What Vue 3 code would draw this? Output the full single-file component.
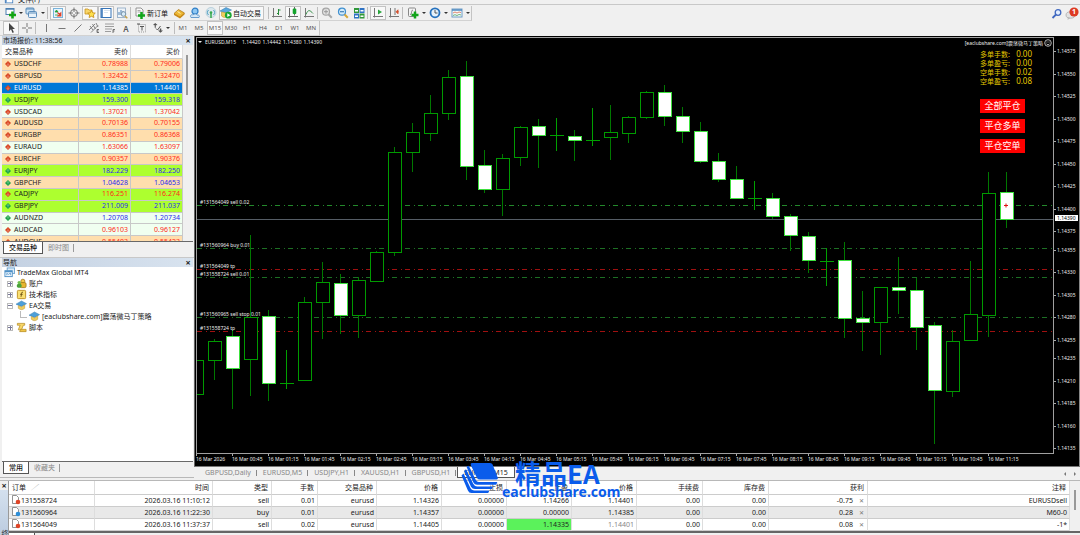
<script setup>
const ic = {
  newChart: '<rect x="1" y="1.500" width="8" height="6" fill="#fff" stroke="#4d7fb0"/><path d="M1 2h8" stroke="#4d7fb0" stroke-width="1.500"/><path d="M7.500 4.500v7M4 8h7" stroke="#12a512" stroke-width="2.600"/>',
  profiles: '<rect x="1" y="1" width="8" height="6" rx="1" fill="#cfe4f5" stroke="#5b8dbb"/><path d="M1 2h8" stroke="#5b8dbb"/><rect x="3.500" y="4.500" width="8" height="6" rx="1" fill="#e8f2fa" stroke="#5b8dbb"/><path d="M4 6h7" stroke="#5b8dbb"/>',
  market: '<rect x="1.500" y="1.500" width="9" height="9" fill="#eaf4fb" stroke="#79b4dc"/><path d="M3 5l1.500-2L6 5zM3 8h3" stroke="#22a03a" fill="#22a03a" stroke-width=".8"/><path d="M5.500 5.500l3 3M8.800 6v3H6z" stroke="#e0442c" fill="#e0442c" stroke-width="1.200"/>',
  target: '<circle cx="6" cy="6" r="3.500" fill="none" stroke="#777"/><path d="M6 .5V5M6 7v4.500M.5 6H5M7 6h4.500" stroke="#777"/>',
  navigator: '<path d="M1 2h3l1 1h3v4H1z" fill="#f8d66a" stroke="#c79320" stroke-width=".8"/><path d="M7.500 3.500l1.200 2.300 2.600.3-1.900 1.800.5 2.600-2.400-1.200-2.400 1.200.5-2.600-1.900-1.800 2.600-.3z" fill="#ffe14d" stroke="#c48a12" stroke-width=".8"/>',
  terminal: '<rect x="1" y="1.500" width="10" height="9" fill="#fff" stroke="#3674b8"/><path d="M2 2v8" stroke="#3674b8" stroke-width="1.500"/><path d="M4 3.500h6M4 5.500h4" stroke="#cfdcea" stroke-width=".8"/>',
  tester: '<rect x="1.500" y="1" width="8" height="9.500" fill="#eef3f8" stroke="#8aa5c0" stroke-width=".8"/><path d="M3 8V5M5 8V3M7 7V4" stroke="#4d82b8"/><circle cx="7.500" cy="7" r="2.300" fill="#d7ecfa" stroke="#7b93a8"/><path d="M9 9l2.300 2.300" stroke="#c9a24a" stroke-width="1.500"/>',
  order: '<path d="M2 1h5l2 2v6H2z" fill="#fafafa" stroke="#888" stroke-width=".9"/><path d="M3.500 3.500h3M3.500 5h4" stroke="#888" stroke-width=".7"/><path d="M7.500 5v7M4 8.500h7" stroke="#12a51b" stroke-width="2.500"/>',
  gold: '<path d="M1 6.500l4.500-4 6 3.500-4.500 4.500z" fill="#edb835" stroke="#a8700e" stroke-width=".7"/><path d="M1 6.500l6 3 4.500-3.500v1.500L7 11.500 1 8z" fill="#c98a18"/><path d="M4.500 4.500l3 2" stroke="#fff0b0"/>',
  cloud: '<circle cx="6" cy="4.200" r="3" fill="#8fc7f2" stroke="#2f7fc8" stroke-width="1.200"/><path d="M2 10.500c-1.500-2 .5-3.500 2-2.500 1-1.500 3.500-1.500 4 0 2-.5 3 1 2 2.500z" fill="#d5e7f6" stroke="#5a93c8" stroke-width=".9"/>',
  signal: '<circle cx="6" cy="5.500" r="5" fill="#dce8ee" stroke="#a6c4d4" stroke-width=".7"/><path d="M3.500 8a3.400 3.400 0 010-5M8.500 8a3.400 3.400 0 000-5" stroke="#4a9dc0" fill="none"/><circle cx="6" cy="5.500" r="1.300" fill="#35a84c"/><path d="M6 6v5" stroke="#35a84c" stroke-width="1.500"/>',
  hat: '<path d="M0 4.500L6 1l5.500 3L6 7z" fill="#4d9fd8" stroke="#2d74ac" stroke-width=".5"/><path d="M2.500 6v3c2 2 5 2 7 0V5.500L6 7.500z" fill="#f0cd5d" stroke="#b58d26" stroke-width=".5"/>',
  auto: '<path d="M0 4L6 .5 11.500 3 6 6z" fill="#5aa8dc" stroke="#2d74ac" stroke-width=".5"/><path d="M1.500 5v4c2 2 4 1.500 5 1V6z" fill="#f0cd5d" stroke="#b58d26" stroke-width=".5"/><circle cx="8.300" cy="8.200" r="3.400" fill="#1aa533"/><path d="M7.300 6.300l3 1.900-3 1.900z" fill="#fff"/>',
  bars: '<path d="M2.500 1v9.500M1 9.500h10" stroke="#777"/><path d="M7.500 2v6M6 6.500h1.500M7.500 3H9.500" stroke="#278a38"/>',
  candle: '<path d="M2.500 1v9.500M1 9.500h10M7.500 0v8.500" stroke="#666"/><rect x="5.700" y="1.500" width="3.600" height="5.500" rx="1" fill="#14a32c"/>',
  line: '<path d="M2.500 1v9.500M1 9.500h10" stroke="#777"/><path d="M3 7.500C5 2 7 3 10 6.500" fill="none" stroke="#3d9450"/>',
  zoomIn: '<circle cx="5" cy="4.700" r="3.500" fill="#e3e3e3" stroke="#a5a5a5" stroke-width="1.200"/><path d="M3 4.700h4M5 2.700v4" stroke="#999"/><path d="M7.600 7.500l3.200 3.300" stroke="#aaa" stroke-width="2"/>',
  zoomOut: '<circle cx="5" cy="4.700" r="3.500" fill="#d5ecfa" stroke="#3f8fd0" stroke-width="1.200"/><path d="M3 4.700h4" stroke="#3f7fb8" stroke-width="1.200"/><path d="M7.600 7.500l3.200 3.300" stroke="#d6a93b" stroke-width="2"/>',
  tiles: '<rect x="1" y="1" width="5" height="5" fill="#30983a"/><rect x="6.500" y="1" width="5" height="5" fill="#2e72c4"/><rect x="1" y="6.500" width="5" height="5" fill="#2e72c4"/><rect x="6.500" y="6.500" width="5" height="5" fill="#30983a"/><path d="M2 3.800h3M7.500 3.800h3M2 9.300h3M7.500 9.300h3" stroke="#fff" stroke-width="1.500"/>',
  scroll: '<path d="M2.500 1v9.500M1 9.500h10" stroke="#777"/><path d="M6 2.500l4 2.500-4 2.500z" fill="#2aa53c"/>',
  shift: '<path d="M2.500 1v9.500M1 9.500h10M7 1v7" stroke="#777"/><path d="M11 4.800H8.500M8 4.800l2-2v4z" stroke="#d4512e" fill="#d4512e" stroke-width=".8"/>',
  indicator: '<rect x="1.500" y="1" width="7" height="8.500" rx="1" fill="#f4f4f4" stroke="#888"/><path d="M6 3c-2 0-1 5-3 4.500" fill="none" stroke="#777"/><path d="M8 4.500v7M4.500 8h7" stroke="#12a51b" stroke-width="2.500"/>',
  clock: '<circle cx="6" cy="5.800" r="4.500" fill="#e6f2fb" stroke="#2672be" stroke-width="1.800"/><path d="M6 3v3h2.500" fill="none" stroke="#444" stroke-width=".9"/>',
  template: '<rect x="1" y="2" width="10" height="8" fill="#f5f9fc" stroke="#6d9cc6"/><path d="M1 3h10" stroke="#4d88bf" stroke-width="1.500"/><path d="M2 6l2-1 2 1 2-1 2 .5" fill="none" stroke="#d66a4a" stroke-width=".8"/><path d="M2 8.500l2-.8 2 .8 2-1 2 .5" fill="none" stroke="#4aa25a" stroke-width=".8"/>',
  cursor: '<path d="M4 1v8.200l2-1.900L7.500 11l1.400-.7L7.400 7H10z" fill="#444"/>',
  cross: '<path d="M6 1v4M6 7v4M1 6h4M7 6h4" stroke="#777"/>',
  vline: '<path d="M6.500 2v8" stroke="#777"/>',
  hline: '<path d="M2.500 6.500h7" stroke="#777"/>',
  dline: '<path d="M2.500 9.500l7-7" stroke="#777"/>',
  channel: '<path d="M1 8l6-6M3 10.500l7-7M2 4l3 4M4.500 2l3 5M8 1l2 4" stroke="#777" stroke-width=".9"/><path d="M11 7.500H9v3h2M9 9h1.500" stroke="#555" fill="none" stroke-width=".8"/>',
  fibo: '<path d="M1 2h9M1 4.500h9M1 7h7M1 9.500h6" stroke="#888" stroke-width=".8"/><path d="M9 11V7.500h2M9 9h1.500" stroke="#555" fill="none" stroke-width=".8"/>',
  label: '<rect x="2.500" y="2.500" width="7" height="7.500" fill="none" stroke="#999" stroke-dasharray="1 1"/><path d="M4 4.500h4M6 4.500v4M1 2h3" stroke="#555"/>',
  arrows: '<path d="M1 3l2.200-2L5.500 3 3.800 3.300v2.500H2.700V3.300zM6 8.500l2.500 2.300 2.500-2.300H9.300V6.500H7.800v2z" fill="#555"/><path d="M4 6.500l1.500 1.500L8.500 4" fill="none" stroke="#555"/>',
  accounts: '<circle cx="7.500" cy="3.500" r="2.200" fill="#f2c94c" stroke="#9c7417" stroke-width=".8"/><rect x="4.500" y="5" width="6.500" height="5.500" rx="1.500" fill="#e6b62f" stroke="#9c7417" stroke-width=".8"/><circle cx="3.500" cy="5" r="1.800" fill="#6cc04a"/><rect x="1" y="6.500" width="5" height="4" rx="1.500" fill="#4aa23a"/>',
  fx: '<rect x="1.500" y="1.500" width="9" height="9" rx="1" fill="#f9df72" stroke="#bd8f22"/><path d="M7.500 3.500c-2-.5-1.300 2-2 5M4.500 5.800h2.800" fill="none" stroke="#6b5010"/>',
  script: '<path d="M1.500 1.500h8v2H8l-2 5H2.500l2-5h-3z" fill="#f8d768" stroke="#b58a20" stroke-width=".8"/><path d="M5 8h6v2.500H4z" fill="#f0c548" stroke="#b58a20" stroke-width=".8"/>',
  servers: '<rect x="3.500" y="1" width="8" height="6" fill="#dcecf8" stroke="#6ba3d0"/><rect x="1" y="4" width="8" height="6.500" fill="#f2f9ff" stroke="#4c8fc6"/><path d="M1 5h8" stroke="#4c8fc6" stroke-width="1.500"/><path d="M3 9V7l2 1 2-1.500V9" fill="none" stroke="#4c8fc6" stroke-width=".8"/>',
}
const bar1 = [
  { i: 'newChart', t: '新图表', c: 4 }, { i: 'profiles', t: '配置', c: 8 }, { s: 3 },
  { i: 'market', t: '市场报价', on: 1 }, { i: 'target', t: '数据窗口' }, { i: 'navigator', t: '导航', on: 1 }, { i: 'terminal', t: '终端', on: 1 }, { i: 'tester', t: '策略测试' }, { s: 3 },
  { i: 'order', t: '新订单', text: 1, w: 'w38' }, { i: 'gold', t: '编辑器' }, { i: 'cloud', t: '云' }, { i: 'signal', t: '信号' }, { i: 'auto', t: '自动交易', text: 1, on: 1, w: 'w45' }, { s: 5 },
  { i: 'bars', t: '柱状图' }, { i: 'candle', t: '阴阳烛', on: 1 }, { i: 'line', t: '折线图' }, { s: 2 },
  { i: 'zoomIn', t: '放大' }, { i: 'zoomOut', t: '缩小' }, { i: 'tiles', t: '平铺' }, { s: 3 },
  { i: 'scroll', t: '自动滚动', on: 1 }, { i: 'shift', t: '图表平移' }, { s: 3 },
  { i: 'indicator', t: '指标', c: 6 }, { i: 'clock', t: '时间周期', c: 6 }, { i: 'template', t: '模板', c: 6 },
]
const bar2 = [
  { i: 'cursor', t: '光标', on: 1 }, { i: 'cross', t: '十字' }, { s: 3 }, { i: 'vline', t: '垂直线' }, { i: 'hline', t: '水平线' }, { i: 'dline', t: '趋势线' },
  { i: 'channel', t: '通道' }, { i: 'fibo', t: '斐波那契' }, { l: 'A', big: 1 }, { i: 'label', t: '标签' }, { i: 'arrows', t: '箭头', c: 4 }, { s: 5 },
  ...['M1', 'M5', 'M15', 'M30', 'H1', 'H4', 'D1', 'W1', 'MN'].map((l) => ({ l, on: l === 'M15' })),
]

const quotes = [
  ['USDCHF', '0.78988', '0.79006', 'peach', 'red', 0], ['GBPUSD', '1.32452', '1.32470', 'peach', 'red', 0],
  ['EURUSD', '1.14385', '1.14401', 'sel', 'white', 0], ['USDJPY', '159.300', '159.318', 'lime', 'blue', 1],
  ['USDCAD', '1.37021', '1.37042', 'mint', 'red', 0], ['AUDUSD', '0.70136', '0.70155', 'peach', 'red', 0],
  ['EURGBP', '0.86351', '0.86368', 'peach', 'red', 0], ['EURAUD', '1.63066', '1.63097', 'mint', 'red', 0],
  ['EURCHF', '0.90357', '0.90376', 'peach', 'red', 0], ['EURJPY', '182.229', '182.250', 'lime', 'blue', 1],
  ['GBPCHF', '1.04628', '1.04653', 'peach', 'blue', 1], ['CADJPY', '116.251', '116.274', 'lime', 'red', 0],
  ['GBPJPY', '211.009', '211.037', 'lime', 'blue', 1], ['AUDNZD', '1.20708', '1.20734', 'mint', 'blue', 1],
  ['AUDCAD', '0.96103', '0.96127', 'mint', 'red', 0], ['AUDCHF', '0.55403', '0.55423', 'peach', 'red', 0],
]

/* high, body top, body bottom, low, kind: u = hollow, d = filled, x = doji */
const candles = [
  [313, 322, 356, 362, 'u'], [301, 303, 322, 342, 'u'], [292, 298, 330, 371, 'd'], [197, 279, 321, 358, 'u'], [272, 278, 345, 363, 'd'],
  [312, 345, 345, 351, 'x'], [259, 264, 342, 343, 'u'], [224, 244, 264, 301, 'u'], [236, 245, 277, 296, 'd'], [239, 242, 277, 300, 'u'],
  [213, 214, 243, 243, 'u'], [109, 114, 214, 218, 'u'], [85, 94, 114, 134, 'u'], [57, 75, 95, 103, 'u'], [32, 39, 75, 82, 'u'],
  [23, 38, 128, 142, 'd'], [112, 127, 151, 155, 'd'], [116, 120, 151, 178, 'u'], [88, 89, 119, 128, 'u'], [81, 88, 97, 130, 'd'],
  [80, 97, 97, 113, 'x'], [92, 98, 102, 123, 'd'], [70, 102, 102, 108, 'x'], [67, 94, 99, 122, 'u'], [78, 79, 95, 105, 'u'],
  [53, 54, 79, 81, 'u'], [47, 54, 78, 88, 'd'], [69, 78, 93, 105, 'd'], [84, 93, 123, 125, 'd'], [115, 123, 141, 144, 'd'],
  [128, 141, 160, 160, 'd'], [143, 160, 160, 172, 'x'], [155, 160, 178, 181, 'd'], [176, 178, 197, 213, 'd'], [194, 198, 222, 235, 'd'],
  [210, 223, 223, 248, 'x'], [204, 222, 280, 300, 'd'], [253, 280, 284, 313, 'd'], [249, 249, 284, 317, 'u'], [219, 249, 252, 276, 'd'],
  [240, 252, 289, 312, 'd'], [284, 287, 352, 406, 'd'], [292, 303, 353, 359, 'u'], [223, 276, 302, 302, 'u'], [134, 155, 277, 299, 'u'],
  [134, 154, 181, 190, 'd'],
]
const cx = (i) => i * 18
const levels = [
  [167, 'g1', '#131564049 sell 0.02'], [210, 'g2', '#131560964 buy 0.01'], [231, 'r', '#131564049 tp'],
  [239, 'g2', '#131558724 sell 0.01'], [279, 'g2', '#131560965 sell stop 0.01'], [293, 'r', '#131558724 tp'],
]
const prices = [
  ['1.14575', 14], ['1.14550', 37], ['1.14525', 59], ['1.14500', 82], ['1.14475', 104], ['1.14450', 127], ['1.14425', 149], ['1.14400', 172],
  ['1.14375', 194], ['1.14355', 213], ['1.14330', 235], ['1.14305', 258], ['1.14280', 280], ['1.14255', 303], ['1.14235', 321], ['1.14210', 344],
  ['1.14185', 366], ['1.14160', 389], ['1.14135', 411],
]
const times = ['16 Mar 2026']
for (let k = 0; k < 22; k++) {
  const m = 45 + k * 30
  times.push(`16 Mar ${String(Math.floor(m / 60)).padStart(2, '0')}:${String(m % 60).padStart(2, '0')}`)
}
const stats = [['多单手数:', '0.00'], ['多单盈亏:', '0.00'], ['空单手数:', '0.02'], ['空单盈亏:', '0.08']]
const chartTabs = ['GBPUSD,Daily', 'EURUSD,M5', 'USDJPY,H1', 'XAUUSD,H1', 'GBPUSD,H1', 'EURUSD,M15']
const heads = ['时间', '类型', '手数', '交易品种', '价格', '止损', '止盈', '价格', '手续费', '库存费']
const orders = [
  { id: '131558724', side: 'sell', v: ['2026.03.16 11:10:12', 'sell', '0.01', 'eurusd', '1.14326', '0.00000', '1.14266', '1.14401', '0.00', '0.00'], p: '-0.75', n: 'EURUSDsell' },
  { id: '131560964', side: 'buy', v: ['2026.03.16 11:22:30', 'buy', '0.01', 'eurusd', '1.14357', '0.00000', '0.00000', '1.14385', '0.00', '0.00'], p: '0.28', n: 'M60-0' },
  { id: '131564049', side: 'sell', v: ['2026.03.16 11:37:37', 'sell', '0.02', 'eurusd', '1.14405', '0.00000', '1.14335', '1.14401', '0.00', '0.00'], p: '0.08', n: '-1*' },
]
</script>

<template>
  <div class="app">
    <header class="bars">
      <div class="menu"><svg class="ico" viewBox="0 0 12 12" v-html="ic.terminal"></svg><span>文件(F)</span></div>
      <div class="barline">
        <div v-for="(bar, bi) in [bar1, bar2]" :key="bi" class="bar">
          <template v-for="(b, k) in bar" :key="k">
            <i v-if="b.s" class="sep" :class="'s' + b.s"></i>
            <template v-else>
              <button class="tb" :class="[b.w, { on: b.on, big: b.big }]" type="button" :aria-label="b.t || b.l">
                <svg v-if="b.i" class="ico" viewBox="0 0 12 12" v-html="ic[b.i]"></svg>
                <span v-if="b.text">{{ b.t }}</span>
                <template v-if="b.l">{{ b.l }}</template>
              </button>
              <i v-if="b.c" class="caret" :class="'c' + b.c"></i>
            </template>
          </template>
        </div>
        <div class="tools">
          <button type="button" aria-label="搜索"><svg class="ico" viewBox="0 0 12 12"><circle cx="7" cy="4.500" r="2.800" fill="#e4efff" stroke="#4068c0" stroke-width="1.300" /><path d="M5 6.500L1.500 10" stroke="#4068c0" stroke-width="1.800" /></svg></button>
          <button type="button" class="chat" aria-label="消息"><svg viewBox="0 0 14 14"><ellipse cx="5.500" cy="8" rx="4.500" ry="3.200" fill="#e2e2e2" stroke="#aaa" stroke-width=".8" /><path d="M3 10l-.5 3 3-2z" fill="#bbb" /><circle cx="9" cy="5" r="4.600" fill="#dd3a22" /></svg><b>1</b></button>
        </div>
      </div>
    </header>

    <main class="work">
      <aside class="side">
        <section class="panel">
          <h2 class="title"><span>市场报价: 11:38:56</span><button type="button" aria-label="关闭">×</button></h2>
          <div class="quotes">
            <table>
              <thead><tr><th class="sym">交易品种</th><th>卖价</th><th>买价</th></tr></thead>
              <tbody>
                <tr v-for="q in quotes" :key="q[0]" :class="q[3]">
                  <td class="sym"><svg viewBox="0 0 6 6"><path d="M3 0l3 3-3 3-3-3z" :fill="q[5] ? '#15a045' : '#d8401c'" /><path :d="q[5] ? 'M3 1.500v3M1.800 2.800L3 1.500l1.200 1.300' : 'M3 1.500v3M1.800 3.200L3 4.500l1.200-1.300'" fill="none" stroke="#fff" stroke-width=".3" /></svg>{{ q[0] }}</td>
                  <td :class="q[4]">{{ q[1] }}</td><td :class="q[4]">{{ q[2] }}</td>
                </tr>
              </tbody>
            </table>
            <i class="thumb"></i>
          </div>
          <nav class="tabs"><button type="button" class="act">交易品种</button><button type="button">即时图</button></nav>
        </section>
        <section class="panel nav">
          <h2 class="title"><span>导航</span><button type="button" aria-label="关闭">×</button></h2>
          <ul class="tree">
            <li class="root"><svg class="ico" viewBox="0 0 12 12" v-html="ic.servers"></svg>TradeMax Global MT4</li>
            <li><i class="box plus"></i><svg class="ico" viewBox="0 0 12 12" v-html="ic.accounts"></svg>账户</li>
            <li><i class="box plus"></i><svg class="ico" viewBox="0 0 12 12" v-html="ic.fx"></svg>技术指标</li>
            <li><i class="box"></i><svg class="ico" viewBox="0 0 12 12" v-html="ic.hat"></svg>EA交易</li>
            <li class="leaf"><i class="elbow"></i><svg class="ico" viewBox="0 0 12 12" v-html="ic.hat"></svg>[eaclubshare.com]震荡微马丁策略</li>
            <li><i class="box plus"></i><svg class="ico" viewBox="0 0 12 12" v-html="ic.script"></svg>脚本</li>
          </ul>
          <nav class="tabs"><button type="button" class="act">常用</button><button type="button">收藏夹</button></nav>
        </section>
      </aside>

      <section class="chartcol">
        <div class="chart">
          <div class="plot">
            <svg class="draw">
              <line x1="0" x2="100%" y1="181.500" y2="181.500" stroke="#555d66" />
              <line v-for="l in levels" :key="l[2]" x1="0" x2="100%" :y1="l[0] + 0.5" :y2="l[0] + 0.5" :class="l[1]" />
              <g v-for="(c, i) in candles" :key="i" :class="c[4]">
                <line class="wick" :x1="cx(i) - 0.5" :x2="cx(i) - 0.5" :y1="c[0]" :y2="c[3]" />
                <line v-if="c[4] === 'x'" :x1="cx(i) - 7" :x2="cx(i) + 7" :y1="c[1] + 0.5" :y2="c[1] + 0.5" />
                <rect v-else :x="cx(i) - 6.5" :y="c[1] + 0.5" width="13" :height="c[2] - c[1]" />
              </g>
              <path d="M807 167.500h4M809 165.500v4" stroke="#e01010" />
              <text v-for="l in levels" :key="l[2]" x="3" :y="l[0] - 1">{{ l[2] }}</text>
            </svg>
            <div class="quote"><i class="caret"></i><span>EURUSD,M15</span><span>1.14420</span><span>1.14442</span><span>1.14380</span><span>1.14390</span></div>
            <div class="ea"><span>[eaclubshare.com]震荡微马丁策略</span><svg viewBox="0 0 8 8"><circle cx="4" cy="4" r="3.300" fill="none" stroke="#ddd" stroke-width=".8" /><path d="M2.500 3h1M4.500 3h1M2.300 4.600c.7 1.500 2.700 1.500 3.400 0" fill="none" stroke="#ddd" stroke-width=".8" /></svg></div>
            <div class="info">
              <p v-for="s in stats" :key="s[0]"><span>{{ s[0] }}</span><b>{{ s[1] }}</b></p>
              <div class="btns"><button type="button">全部平仓</button><button type="button">平仓多单</button><button type="button">平仓空单</button></div>
            </div>
          </div>
          <svg class="prices">
            <template v-for="p in prices" :key="p[0]"><path :d="`M0 ${p[1] + 0.5}h2`" stroke="#aaa" /><text x="3" :y="p[1] + 2">{{ p[0] }}</text></template>
            <rect x="1" y="178" width="23" height="6" fill="#fff" /><text x="3" y="183" class="cur">1.14390</text>
          </svg>
          <div class="times"><span v-for="t in times" :key="t">{{ t }}</span></div>
        </div>
        <nav class="ctabs">
          <button v-for="t in chartTabs" :key="t" type="button" :class="{ act: t === 'EURUSD,M15' }">{{ t }}</button>
          <span class="arrows"><i></i><i class="r"></i></span>
        </nav>
      </section>
    </main>

    <section class="terminal">
      <div class="vtitle"><button type="button" aria-label="关闭">×</button><span>终端</span></div>
      <div class="tbody">
        <div class="grid">
          <table>
            <colgroup><col class="a" /><col class="b" /><col class="c" /><col class="d" /><col class="e" /><col v-for="n in 6" :key="n" :class="n > 4 ? 'h' : 'f'" /><col class="g" /><col /></colgroup>
            <thead><tr><th class="first">订单 <em>∕</em></th><th v-for="(h, k) in heads" :key="k">{{ h }}</th><th>获利</th><th>注释</th></tr></thead>
            <tbody>
              <tr v-for="o in orders" :key="o.id">
                <td class="first"><svg viewBox="0 0 10 10"><path d="M1.500.5h4l2 2v6h-6z" fill="#fff" stroke="#777" stroke-width=".8" /><circle cx="7" cy="7" r="2.300" :fill="o.side === 'buy' ? '#2c8ed8' : '#de4526'" /></svg>{{ o.id }}</td>
                <td v-for="(v, k) in o.v" :key="k" :class="{ hit: v === '1.14335', dim: k === 7 && o.p === '0.08' }">{{ v }}</td>
                <td class="profit">{{ o.p }}<button type="button" aria-label="平仓">✕</button></td>
                <td>{{ o.n }}</td>
              </tr>
            </tbody>
          </table>
          <div class="rail"><i></i></div>
        </div>
        <div class="foot"><i></i></div>
      </div>
    </section>

    <div class="mark">
      <svg viewBox="0 0 38 34" fill="#0a5ceb"><path d="M11 2h18q2 0 2.600 1.600l5.200 13.200q.5 1.700-1.300 1.700H19q-2 0-3-1.600L9.700 4Q9.200 2 11 2z" /><path d="M5.500 5.800l2.300-1 7 14.200q1 2 3 2h18.500l-1 2.700H16q-2.500 0-3.600-2.300z" /><path d="M3 10l2-1.800 7.200 14.600q1.300 2.700 4 2.700H32l-1 2.500H14q-2.800 0-4-2.300z" /><path d="M.5 14.500l2-2 6.700 14q1.300 3 4.300 3h15l-1.300 2.500H10.500q-2.500 0-3.600-2.500z" /></svg>
      <div><strong>精品EA</strong><span>eaclubshare.com</span></div>
    </div>
  </div>
</template>

<style>
html, body { margin: 0; overflow: hidden; background: #f0f0f0; }
</style>

<style scoped>
.app { position: relative; display: flex; flex-direction: column; height: 100vh; overflow: hidden; background: #f0f0f0; color: #222; font: 7px/11px "Noto Sans", "Noto Sans CJK SC", sans-serif; }
button { padding: 0; border: 0; background: none; font: inherit; color: inherit; }
svg { display: block; flex: none; }
.ico { width: 12px; height: 12px; }
table { border-collapse: separate; border-spacing: 0; table-layout: fixed; width: 100%; }
th { font-weight: 400; }
th, td { padding: 0; white-space: nowrap; text-align: right; }

.bars { flex: none; height: 36px; }
.menu { display: flex; align-items: flex-end; gap: 3px; height: 4px; padding-left: 3px; overflow: hidden; border-bottom: 1px solid #c8c8c8; line-height: 9px; }
.menu .ico { height: 9px; }
.barline { position: relative; padding-top: 1px; }
.bar { display: flex; width: max-content; height: 15px; padding-left: 3px; border-right: 1px solid #c4c4c4; border-bottom: 1px solid #d2d2d2; box-sizing: border-box; }
.tb { display: flex; align-items: center; justify-content: center; width: 16px; height: 14px; font-size: 6px; color: #555; white-space: nowrap; box-sizing: border-box; }
.tb.on { border: 1px solid #c2c2c2; background: #f8f8f8; }
.tb.big { font-size: 8px; font-weight: 600; }
.tb span { font-size: 7px; color: #111; }
.w38 { width: 38px; padding-left: 1px; gap: 1px; justify-content: flex-start; }
.w45 { width: 45px; gap: 1px; justify-content: flex-start; }
.sep { margin: 1px 0; border-left: 1px solid #bdbdbd; box-sizing: border-box; }
.s2 { width: 2px; } .s3 { width: 3px; } .s5 { width: 5px; border-left: 0; border-right: 1px solid #bdbdbd; }
.caret { display: flex; align-items: center; justify-content: center; }
.caret::before { content: ""; border: 2px solid transparent; border-top-color: #333; border-bottom: 0; }
.c4 { width: 4px; } .c6 { width: 6px; } .c8 { width: 8px; }
.tools { position: absolute; top: 2px; right: 1px; display: flex; gap: 2px; }
.chat { position: relative; width: 14px; height: 14px; }
.chat b { position: absolute; top: 0; right: 3px; color: #fff; font-size: 7px; line-height: 10px; }

.work { flex: 1; display: grid; grid-template-columns: 194px minmax(0, 1fr); min-height: 0; }
.side { display: flex; flex-direction: column; min-height: 0; margin-bottom: 2px; border-bottom: 1px solid #b8b8b8; }
.panel { padding: 0 1px 0 2px; }
.title { display: flex; justify-content: space-between; height: 9px; margin: 0; padding: 0 1px; background: linear-gradient(90deg, #c4d1e2, #d8e3ef); font-size: 7px; font-weight: 400; line-height: 9px; }
.title button, .vtitle button { width: 8px; font-size: 9px; font-weight: 700; line-height: 9px; }
.quotes { position: relative; height: 196px; overflow: hidden; padding-right: 10px; border-bottom: 1px solid #686868; }
.quotes table { height: 203px; }
.quotes th { height: 14px; padding-right: 2px; background: #fff; border-right: 1px solid #ddd; border-bottom: 1px solid #ccc; box-sizing: border-box; }
.quotes td { padding-right: 2px; border-right: 1px solid #c8c8c8; border-bottom: 1px solid #c8c8c8; line-height: 10px; }
.quotes .sym { text-align: left; color: #222; }
.quotes th.sym { padding-left: 3px; width: 77px; }
.sym svg { display: inline-block; width: 6px; height: 6px; margin: 0 3px 0 3px; vertical-align: -1px; }
.peach td { background: #ffdead; } .lime td { background: #adff2f; } .mint td { background: #f0fff0; } .sel td { background: #0078d7; }
.quotes .sel .sym { color: #fff; }
.red { color: #ff2a1a; } .blue { color: #2a2aee; } .white { color: #fff; }
.thumb { position: absolute; top: 10px; right: 5px; width: 2px; height: 40px; background: #999; }
.tabs { display: flex; height: 15px; padding-left: 1px; }
.tabs button { height: 12px; padding: 0 5px; color: #888; line-height: 10px; position: relative; }
.tabs button:not(.act)::after { content: ""; position: absolute; top: 2px; right: 0; height: 8px; border-right: 1px solid #999; }
.tabs .act { padding: 0 5px; border: 1px solid #555; border-top: 0; background: #fff; color: #111; font-weight: 500; }
.nav { flex: 1; display: flex; flex-direction: column; min-height: 0; border-top: 1px solid #c8c8c8; }
.nav .tabs { flex: none; }
.tree { flex: 1; margin: 0; padding: 0 0 0 2px; list-style: none; background: #fff; border-bottom: 1px solid #686868; }
.tree li { display: flex; align-items: center; gap: 2px; height: 11px; padding-left: 3px; line-height: 11px; }
.tree .ico { width: 11px; height: 11px; }
.tree .root { padding: 0; }
.box { position: relative; width: 4px; height: 4px; margin-right: 1px; border: 1px solid #bbb; background: linear-gradient(#779, #779) center / 4px 1px no-repeat; }
.box.plus { background: linear-gradient(#779, #779) center / 4px 1px no-repeat, linear-gradient(#779, #779) center / 1px 4px no-repeat; }
.tree .leaf { padding-left: 16px; }
.elbow { width: 6px; height: 6px; margin-top: -5px; border-left: 1px solid #bbb; border-bottom: 1px solid #bbb; }

.chartcol { display: flex; flex-direction: column; min-width: 0; }
.chart { flex: 1; display: grid; grid-template: minmax(0, 1fr) 12px / minmax(0, 1fr) 25px; padding: 1px 0 0 1px; border-left: 1px solid #666; border-right: 1px solid #888; background: #000; color: #eee; font-size: 5px; }
.plot { position: relative; overflow: hidden; border: 1px solid #a0a0a0; }
.draw { width: 100%; height: 100%; }
text { fill: #eee; font-size: 5px; }
.prices { width: 25px; height: 100%; }
.prices .cur { fill: #000; }
.g1 { stroke: #23892b; stroke-dasharray: 5 4 1 3; }
.g2 { stroke: #1d7024; stroke-dasharray: 5 4 1 3; }
.r { stroke: #a01010; stroke-dasharray: 5 4 1 3; }
.wick { stroke: #007800; }
.u rect { fill: #000; stroke: #009a00; }
.d rect { fill: #fff; stroke: #3de03d; }
.x line { stroke: #00a000; }
.quote { position: absolute; top: 1px; left: 0; display: flex; align-items: center; gap: 2px; line-height: 6px; }
.quote .caret { width: 6px; }
.quote .caret::before { border-top-color: #eee; }
.quote span:nth-child(2) { margin-right: 4px; }
.ea { position: absolute; top: 1px; right: 1px; display: flex; gap: 1px; line-height: 8px; }
.ea svg { width: 8px; height: 8px; }
.info { position: absolute; top: 12px; right: 21px; width: 52px; color: #e6c800; font-size: 7px; }
.info p { display: flex; justify-content: space-between; margin: 0; line-height: 9px; }
.info b { font-size: 8px; font-weight: 400; line-height: 8px; }
.btns { display: flex; flex-direction: column; align-items: flex-start; gap: 6px; margin-top: 13px; }
.btns button { width: 45px; height: 14px; background: #f00; color: #fff; font-size: 9px; line-height: 14px; }
.times { display: flex; overflow: hidden; grid-column: 1 / 3; }
.times span { position: relative; flex: none; width: 36px; line-height: 10px; white-space: nowrap; }
.times span::before { content: ""; position: absolute; top: 0; left: 0; height: 2px; border-left: 1px solid #aaa; }
.ctabs { position: relative; display: flex; height: 13px; padding-left: 5px; border-top: 1px solid #777; color: #888; line-height: 12px; }
.ctabs button { height: 12px; padding: 0 6px; position: relative; }
.ctabs button:not(.act)::after { content: ""; position: absolute; top: 3px; right: 0; height: 6px; border-right: 1px solid #888; }
.ctabs .act { height: 11px; margin-left: 1px; background: #fff; border: 1px solid #555; border-top: 0; color: #222; line-height: 11px; }
.arrows { display: flex; align-items: center; gap: 8px; margin-left: auto; padding-right: 4px; }
.arrows i { border: 2px solid transparent; border-right-color: #777; border-left: 0; }
.arrows .r { border-right: 0; border-left: 2px solid #777; }

.terminal { display: flex; flex: none; height: 54px; border-top: 1px solid #b8b8b8; overflow: hidden; }
.vtitle { width: 8px; display: flex; flex-direction: column; align-items: center; }
.vtitle span { flex: 1; width: 8px; padding-top: 40px; background: linear-gradient(#d4e0ee, #bccce0); writing-mode: vertical-rl; line-height: 8px; box-sizing: border-box; color: #333; white-space: nowrap; overflow: hidden; }
.tbody { flex: 1; min-width: 0; display: flex; flex-direction: column; border-left: 1px solid #999; }
.grid { display: flex; border-bottom: 2px solid #666; }
.grid th { height: 14px; padding-right: 3px; background: #fff; border-right: 1px solid #ddd; border-bottom: 1px solid #ccc; box-sizing: border-box; }
.grid td { height: 12px; padding-right: 2px; background: #fff; border-right: 1px solid #ddd; border-bottom: 1px solid #ccc; box-sizing: border-box; }
.grid tr:nth-child(2) td { background: #e9e9e9; }
.grid .first { text-align: left; padding-left: 2px; }
.grid th.first { padding-left: 3px; }
.first em { margin-left: 3px; color: #888; }
.first svg { display: inline-block; width: 10px; height: 10px; vertical-align: -2px; }
.grid tr .hit { background: #5bf25b; }
.dim { color: #888; }
.profit button { width: 8px; margin-left: 4px; color: #777; font-size: 6px; line-height: 8px; }
.a { width: 86px; } .b { width: 118px; } .c { width: 59px; } .d { width: 46px; } .e { width: 59px; } .f { width: 65px; } .h { width: 66px; } .g { width: 99px; }
.rail { flex: none; width: 10px; }
.rail i { display: block; width: 2px; height: 20px; margin: 9px 0 0 4px; background: #999; }
.foot i { display: block; width: 25px; height: 4px; background: #fff; border-right: 1px solid #555; }

.mark { position: absolute; top: 461px; left: 461px; display: flex; gap: 3px; color: #0a5ceb; font-family: "Noto Sans", "Noto Sans CJK SC", sans-serif; }
.mark svg { width: 38px; height: 34px; }
.mark strong { display: block; padding-left: 13px; font: 700 26px/24px "Noto Sans CJK SC", "Noto Sans", sans-serif; }
.mark span { display: block; font-size: 14px; font-weight: 700; line-height: 14px; }
</style>
